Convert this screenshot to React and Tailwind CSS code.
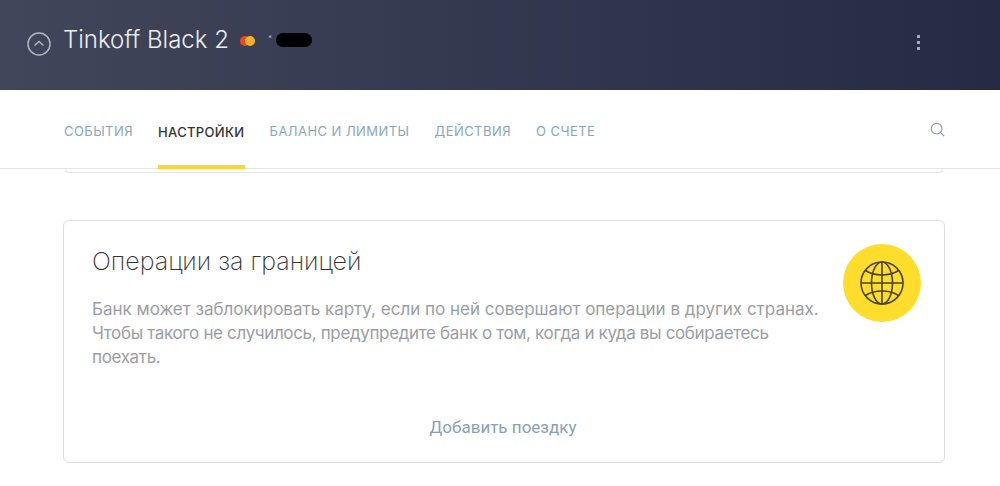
import React from "react";

const tabs = ["События", "Настройки", "Баланс и лимиты", "Действия", "О счете"];

function GlobeIcon() {
  return (
    <svg width="44" height="44" viewBox="0 0 44 44" fill="none" stroke="#4a4420" strokeWidth="1.600">
      <circle cx="22" cy="22" r="21" />
      <ellipse cx="22" cy="22" rx="10.500" ry="21" />
      <path d="M22 1v42M1 22h42" />
      <path d="M5.500 9.500c4.500 3 10 4.500 16.500 4.500s12-1.500 16.500-4.500" />
      <path d="M5.500 34.500c4.500-3 10-4.500 16.500-4.500s12 1.500 16.500 4.500" />
    </svg>
  );
}

export default function App() {
  return (
    <div className="h-[486px] overflow-hidden bg-white font-['Inter','Liberation_Sans',sans-serif]">
      {/* Header */}
      <div className="h-[90px] flex items-center justify-between pl-[27px] pr-[80px] bg-gradient-to-r from-[#41465a] to-[#262a44]">
        <div className="flex items-center -mt-[10px]">
          <svg width="24" height="24" viewBox="0 0 24 24" fill="none" stroke="#b4b7c0" className="mt-[8px]">
            <circle cx="12" cy="12" r="11" strokeWidth="1.500" />
            <path d="M7.500 13.500 12 9.500l4.500 4" strokeWidth="1.500" />
          </svg>
          <span className="ml-[12px] w-[165px] whitespace-nowrap text-[24px] leading-[32px] font-light text-[#eceef2]">Tinkoff Black 2</span>
          {/* Mastercard mark */}
          <div className="ml-[12px] mt-[2px] flex">
            <span className="w-[10px] h-[10px] rounded-full bg-[#e8491d]"></span>
            <span className="w-[10px] h-[10px] rounded-full bg-[#f7b02c] -ml-[5px]"></span>
          </div>
          <span className="ml-[13px] w-[4px] text-[8px] leading-none text-[#b4b7c0] -mt-[4px]">*</span>
          <span className="ml-[4px] w-[36px] h-[14px] rounded-full bg-black"></span>
        </div>
        <div className="flex flex-col gap-[3px] -mt-[6px]">
          <span className="w-[3px] h-[3px] bg-[#a5a9bb]"></span>
          <span className="w-[3px] h-[3px] bg-[#a5a9bb]"></span>
          <span className="w-[3px] h-[3px] bg-[#a5a9bb]"></span>
        </div>
      </div>

      {/* Tabs */}
      <div className="h-[79px] flex items-stretch justify-between pl-[64px] pr-[54px] border-b border-[#e3e5e7]">
        <div className="flex gap-[25px] items-stretch">
          {tabs.map((tab) => (
            <div
              key={tab}
              className={
                tab === "Настройки"
                  ? "flex items-center border-b-4 border-[#f5d735] -mb-px pt-[10px] text-[13px] font-medium tracking-[0.35px] uppercase text-[#333333]"
                  : "flex items-center pt-[6px] text-[13px] tracking-[0.45px] uppercase text-[#8ba6b8]"
              }
            >
              {tab}
            </div>
          ))}
        </div>
        <svg width="16" height="16" viewBox="0 0 18 18" fill="none" stroke="#8a9fae" strokeWidth="1.300" className="self-center mt-[2px]">
          <circle cx="7.500" cy="7.500" r="6" />
          <path d="m12 12 4 4" />
        </svg>
      </div>

      {/* Content */}
      <div className="pl-[63px] pr-[55px]">
        <div className="h-[4px] mx-[2px] border-x border-b border-[#e3e5e7] rounded-b-[4px]"></div>
        <div className="mt-[47px] h-[243px] flex flex-col border border-[#dcdfe2] rounded-[6px]">
          <div className="flex-1 flex justify-between pl-[28px] pr-[23px] pt-[23px]">
            <div className="w-[730px]">
              <h2 className="-mt-[1px] text-[25px] leading-[36px] font-extralight text-[#333333]">Операции за границей</h2>
              <p className="mt-[18px] text-[17px] leading-[24px] text-[#9a9ea3]">
                <span className="block">Банк может заблокировать карту, если по ней совершают операции в других странах.</span>
                <span className="block tracking-[-0.35px]">Чтобы такого не случилось, предупредите банк о том, когда и куда вы собираетесь поехать.</span>
              </p>
            </div>
            <div className="w-[78px] h-[78px] rounded-full bg-[#fedd2c] flex items-center justify-center">
              <GlobeIcon />
            </div>
          </div>
          <div className="pb-[23px] mr-[2px] text-center text-[17px] leading-[24px] font-['Roboto'] text-[#8ba1b2]">Добавить поездку</div>
        </div>
      </div>
    </div>
  );
}
